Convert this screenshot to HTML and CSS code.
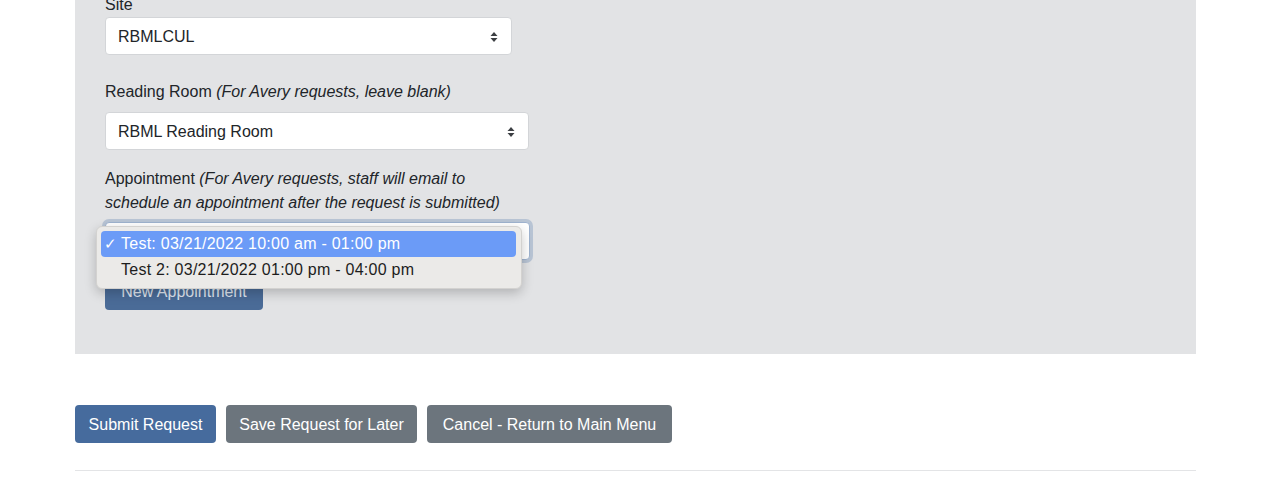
FILE: index.html
```html
<!DOCTYPE html>
<html>
<head>
<meta charset="utf-8">
<link rel="stylesheet" href="styles.css">
</head>
<body>
<div class="page">
  <div class="panel">
    <div class="group g-site">
      <label class="lbl">Site</label>
      <div class="select w-site">
        <span>RBMLCUL</span>
        <svg class="arr" width="8" height="12" viewBox="0 0 8 12"><path d="M4 1 L7.5 5 H0.5 Z M4 11 L7.5 7 H0.5 Z" fill="#3c3f43"/></svg>
      </div>
    </div>
    <div class="group g-room">
      <label class="lbl">Reading Room <em>(For Avery requests, leave blank)</em></label>
      <div class="select w-room">
        <span>RBML Reading Room</span>
        <svg class="arr" width="8" height="12" viewBox="0 0 8 12"><path d="M4 1 L7.5 5 H0.5 Z M4 11 L7.5 7 H0.5 Z" fill="#3c3f43"/></svg>
      </div>
    </div>
    <div class="group g-appt">
      <label class="lbl">Appointment <em>(For Avery requests, staff will email to<br>schedule an appointment after the request is submitted)</em></label>
      <div class="appt-wrap">
        <div class="select w-appt focus"></div>
        <div class="popup">
          <div class="opt sel"><span class="chk">✓</span>Test: 03/21/2022 10:00 am - 01:00 pm</div>
          <div class="opt">Test 2: 03/21/2022 01:00 pm - 04:00 pm</div>
        </div>
      </div>
      <button class="btn btn-new">New Appointment</button>
    </div>
  </div>
  <div class="actions">
    <button class="btn btn-primary">Submit Request</button>
    <button class="btn btn-secondary save">Save Request for Later</button>
    <button class="btn btn-secondary cancel">Cancel - Return to Main Menu</button>
  </div>
  <hr class="rule">
</div>
</body>
</html>
```

FILE: styles.css
```css
* { box-sizing: border-box; }
html, body { margin: 0; padding: 0; background: #fff; overflow: hidden; }
body {
  font-family: "Liberation Sans", Arial, sans-serif;
  font-size: 16px;
  line-height: 24px;
  color: #212529;
}
.page { width: 1121px; margin: 0 0 0 75px; }
.panel {
  background: #e2e3e5;
  margin-top: -8px;
  padding: 0 30px 0 30px;
  height: 362px;
}
.group { display: flex; flex-direction: column; align-items: flex-start; }
.lbl { display: block; margin-bottom: 8px; padding-top: 1px; line-height: 24px; }
.g-site .lbl { margin-bottom: 0; }
.lbl em { font-style: italic; }
.g-site { margin-bottom: 24px; }
.g-room { margin-bottom: 16px; }
.select {
  height: 38px;
  background: #fff;
  border: 1px solid #d3d5d8;
  border-radius: 4px;
  padding: 1px 12px 0 12px;
  display: flex;
  align-items: center;
  justify-content: space-between;
  color: #212529;
  font-size: 16px;
}
.select .arr { margin-right: 1px; }
.w-site { width: 407px; }
.w-room { width: 424px; }
.w-appt { width: 425px; margin-top: -1px; }
.focus {
  border-color: #9fb3cf;
  box-shadow: 0 0 0 3px #b8c4d4;
}
.appt-wrap { position: relative; }
.popup {
  position: absolute;
  left: -9px;
  top: 3px;
  width: 426px;
  background: #ebeae8;
  border: 1px solid #d3d2d0;
  border-radius: 6px;
  box-shadow: 0 4px 12px rgba(0,0,0,0.22);
  padding: 4px 5px 5px 4px;
}
.opt {
  height: 26px;
  line-height: 26px;
  padding-left: 20px;
  position: relative;
  color: #1d1d1d;
  font-size: 16px;
  letter-spacing: 0.25px;
  border-radius: 4px;
}
.opt.sel { background: #6b9bf7; color: #fff; }
.chk { position: absolute; left: 3px; top: 0; font-size: 15px; }
.btn {
  font-family: "Liberation Sans", Arial, sans-serif;
  font-size: 16px;
  line-height: 24px;
  height: 38px;
  padding: 7px 0 5px 0;
  border: 1px solid transparent;
  border-radius: 4px;
  color: #fff;
  cursor: pointer;
  white-space: nowrap;
  text-align: center;
}
.btn-new {
  margin-top: 12px;
  background: #4a6b97;
  color: #dfe5ee;
  width: 158px;
}
.actions {
  display: flex;
  gap: 10px;
  padding-top: 51px;
}
.btn-primary { background: #466b9d; width: 141px; }
.btn-secondary { background: #6c757d; }
.save { width: 191px; }
.cancel { width: 245px; }
.rule {
  margin: 27px 0 0 0;
  border: 0;
  border-top: 1px solid #e3e4e6;
  height: 0;
}
```
